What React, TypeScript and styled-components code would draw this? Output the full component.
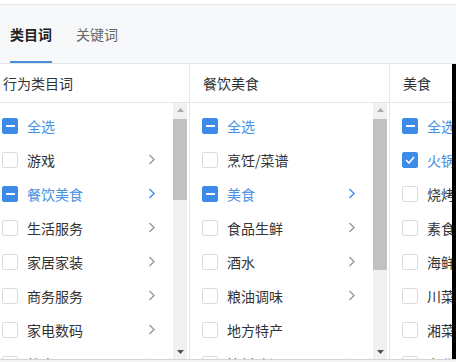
import React from 'react';
import styled, { createGlobalStyle } from 'styled-components';

type Mark = 'none' | 'part' | 'all';

interface Item {
  label: string;
  mark: Mark;
  active?: boolean;
  more?: boolean;
}

interface Column {
  title: string;
  thumb?: number;
  items: Item[];
}

const columns: Column[] = [
  {
    title: '行为类目词',
    thumb: 81,
    items: [
      { label: '全选', mark: 'part', active: true },
      { label: '游戏', mark: 'none', more: true },
      { label: '餐饮美食', mark: 'part', active: true, more: true },
      { label: '生活服务', mark: 'none', more: true },
      { label: '家居家装', mark: 'none', more: true },
      { label: '商务服务', mark: 'none', more: true },
      { label: '家电数码', mark: 'none', more: true },
      { label: '教育', mark: 'none', more: true },
    ],
  },
  {
    title: '餐饮美食',
    thumb: 151,
    items: [
      { label: '全选', mark: 'part', active: true },
      { label: '烹饪/菜谱', mark: 'none' },
      { label: '美食', mark: 'part', active: true, more: true },
      { label: '食品生鲜', mark: 'none', more: true },
      { label: '酒水', mark: 'none', more: true },
      { label: '粮油调味', mark: 'none', more: true },
      { label: '地方特产', mark: 'none' },
      { label: '饮料冲调', mark: 'none', more: true },
    ],
  },
  {
    title: '美食',
    items: [
      { label: '全选', mark: 'part', active: true },
      { label: '火锅', mark: 'all', active: true },
      { label: '烧烤', mark: 'none' },
      { label: '素食', mark: 'none' },
      { label: '海鲜', mark: 'none' },
      { label: '川菜', mark: 'none' },
      { label: '湘菜', mark: 'none' },
      { label: '东北菜', mark: 'none' },
    ],
  },
];

const Check: React.FC<{ mark: Mark }> = ({ mark }) => (
  <Box $on={mark !== 'none'}>
    {mark === 'part' && <Dash />}
    {mark === 'all' && (
      <svg width="10" height="8" viewBox="0 0 10 8">
        <polyline points="1,4 4,7 9,1" fill="none" stroke="#fff" strokeWidth="1.6" />
      </svg>
    )}
  </Box>
);

const Chevron: React.FC<{ active?: boolean }> = ({ active }) => (
  <svg width="7" height="11" viewBox="0 0 7 11">
    <polyline
      points="1.5,1 6,5.5 1.5,10"
      fill="none"
      stroke={active ? '#3d8be8' : '#999'}
      strokeWidth="1.4"
    />
  </svg>
);

const Scrollbar: React.FC<{ size: number }> = ({ size }) => (
  <Track>
    <Arrow>
      <svg width="7" height="4" viewBox="0 0 7 4">
        <polygon points="0,4 3.5,0 7,4" fill="#a8a8a8" />
      </svg>
    </Arrow>
    <Rail>
      <Thumb style={{ height: size }} />
    </Rail>
    <Arrow>
      <svg width="7" height="4" viewBox="0 0 7 4">
        <polygon points="0,0 3.5,4 7,0" fill="#505050" />
      </svg>
    </Arrow>
  </Track>
);

const App: React.FC = () => {
  return (
    <Frame>
      <GlobalStyle />
      <TopGap />
      <TabBar>
        <Tab $current>类目词</Tab>
        <Tab>关键词</Tab>
      </TabBar>
      <Main>
        <Viewport>
          {columns.map((col) => (
            <Col key={col.title}>
              <Head>{col.title}</Head>
              <Body>
                <List>
                  {col.items.map((it) => (
                    <Row key={it.label}>
                      <Check mark={it.mark} />
                      <Label $active={it.active}>{it.label}</Label>
                      {it.more && <Chevron active={it.active} />}
                    </Row>
                  ))}
                </List>
                {col.thumb && <Scrollbar size={col.thumb} />}
              </Body>
            </Col>
          ))}
        </Viewport>
        <Edge />
      </Main>
      <Foot />
    </Frame>
  );
};

const GlobalStyle = createGlobalStyle`
  body {
    margin: 0;
    background: #fff;
    font-family: "Noto Sans CJK SC", "Noto Sans", sans-serif;
  }
`;

const Frame = styled.div`
  width: 456px;
  height: 362px;
  overflow: hidden;
  display: flex;
  flex-direction: column;
  background: #fff;
`;

const TopGap = styled.div`
  height: 4px;
  background: #fff;
`;

const TabBar = styled.div`
  display: flex;
  gap: 24px;
  padding-left: 10px;
  height: 58px;
  background: #f7f8fa;
  border-top: 1px solid #e6e7ea;
  border-bottom: 1px solid #e4e6ea;
`;

const Tab = styled.div<{ $current?: boolean }>`
  display: flex;
  align-items: center;
  box-sizing: border-box;
  height: 58px;
  padding-top: 2px;
  font-size: 14px;
  font-weight: ${(p) => (p.$current ? 700 : 400)};
  color: ${(p) => (p.$current ? '#222' : '#666')};
  border-bottom: 2px solid ${(p) => (p.$current ? '#4a8fd8' : 'transparent')};
`;

const Main = styled.div`
  display: flex;
  height: 296px;
`;

const Viewport = styled.div`
  flex: 1;
  overflow: hidden;
  display: flex;
  margin-left: -10px;
`;

const Edge = styled.div`
  width: 4px;
  background: #000;
`;

const Col = styled.div`
  flex: none;
  width: 200px;
  display: flex;
  flex-direction: column;
  border-right: 1px solid #e6e7ea;
  box-sizing: border-box;
`;

const Head = styled.div`
  height: 38px;
  display: flex;
  align-items: center;
  padding-left: 13px;
  font-size: 14px;
  color: #333;
  border-bottom: 1px solid #e6e7ea;
  white-space: nowrap;
`;

const Body = styled.div`
  display: flex;
  height: 256px;
`;

const List = styled.div`
  flex: 1;
  overflow: hidden;
  padding: 6px 18px 0 12px;
`;

const Row = styled.div`
  display: flex;
  align-items: center;
  height: 34px;
  gap: 9px;
`;

const Box = styled.span<{ $on: boolean }>`
  flex: none;
  width: 16px;
  height: 16px;
  box-sizing: border-box;
  border-radius: 2px;
  display: flex;
  align-items: center;
  justify-content: center;
  background: ${(p) => (p.$on ? '#3d8ae8' : '#fff')};
  border: 1px solid ${(p) => (p.$on ? '#3d8ae8' : '#dcdcdc')};
`;

const Dash = styled.span`
  width: 9px;
  height: 2px;
  background: #fff;
`;

const Label = styled.span<{ $active?: boolean }>`
  flex: 1;
  font-size: 14px;
  white-space: nowrap;
  color: ${(p) => (p.$active ? '#4a8fe2' : '#333')};
`;

const Track = styled.div`
  flex: none;
  width: 14px;
  margin-right: 2px;
  display: flex;
  flex-direction: column;
  background: #f1f1f1;
`;

const Arrow = styled.div`
  height: 14px;
  display: flex;
  align-items: center;
  justify-content: center;
`;

const Rail = styled.div`
  flex: 1;
  padding-top: 2px;
`;

const Thumb = styled.div`
  background: #c1c1c1;
`;

const Foot = styled.div`
  height: 2px;
  border-top: 1px solid #d4d4d4;
  background: #f4f4f4;
`;

export default App;
